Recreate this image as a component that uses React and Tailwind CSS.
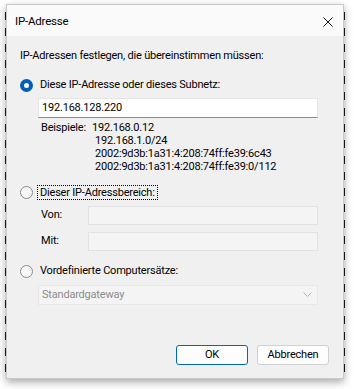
import React from "react"

const FONT = { fontFamily: 'Roboto, "Liberation Sans", Arial, sans-serif', letterSpacing: "-0.2px" }

// radio button, windows 11 style
function Radio({ checked }) {
  if (checked) {
    return (
      <span className="w-[13px] h-[13px] rounded-full bg-[#005fb8] flex items-center justify-center shrink-0">
        <span className="w-[5px] h-[5px] rounded-full bg-white" />
      </span>
    )
  }
  return <span className="w-[13px] h-[13px] rounded-full border border-[#8a8a8a] bg-[#f7f7f7] shrink-0" />
}

export default function App() {
  const beispiele = [
    "192.168.0.12",
    "192.168.1.0/24",
    "2002:9d3b:1a31:4:208:74ff:fe39:6c43",
    "2002:9d3b:1a31:4:208:74ff:fe39:0/112",
  ]

  return (
    <div className="w-[354px] h-[389px] pt-[4px] bg-white text-[11px] text-black" style={FONT}>
      {/* window behind: dashed edges */}
      <div className="ml-[5px] w-[340px] px-[1px] pb-[1px] bg-[repeating-linear-gradient(180deg,transparent_0px,transparent_8px,#1a1a1a_8px,#1a1a1a_16px)]">
        <div className="w-[338px] h-[375px] flex flex-col bg-[#f0f0f0] border border-[#c8c8c8] shadow-[0_3px_8px_rgba(0,0,0,0.35)]">
          {/* TITLE BAR */}
          <div className="h-[31px] bg-[#fafafa] flex items-center justify-between pl-[8px] pr-[10px] pt-[3px] shrink-0">
            <span className="text-[11.5px]">IP-Adresse</span>
            <svg width="10" height="10" viewBox="0 0 10 10">
              <path d="M0.5 0.5 L9.5 9.5 M9.5 0.5 L0.5 9.5" stroke="#111" strokeWidth="1" />
            </svg>
          </div>

          {/* BODY */}
          <div className="flex-1 flex flex-col px-[13px]">
            <div className="h-[14px] leading-[14px] mt-[13px]">
              IP-Adressen festlegen, die übereinstimmen müssen:
            </div>

            <div className="h-[16px] mt-[14px] flex items-center gap-[7px]">
              <Radio checked />
              <span>Diese IP-Adresse oder dieses Subnetz:</span>
            </div>

            <div className="ml-[18px] mt-[5px] w-[280px] h-[20px] bg-white border border-[#e5e5e5] border-b-[#8a8a8a] flex items-center pl-[3px]">
              192.168.128.220
            </div>

            <div className="ml-[21px] mt-[3px] flex leading-[13px]">
              <span className="w-[51px]">Beispiele:</span>
              <div className="flex flex-col">
                {beispiele.map((b, i) => (
                  <span key={i} className={i > 0 ? "pl-[3px]" : ""}>{b}</span>
                ))}
              </div>
            </div>

            <div className="h-[16px] mt-[11px] flex items-center gap-[4px]">
              <Radio />
              <span className="border border-dotted border-black px-[2px] leading-[13px]">Dieser IP-Adressbereich:</span>
            </div>

            <div className="mt-[6px] ml-[21px] flex items-center">
              <span className="w-[47px]">Von:</span>
              <div className="w-[230px] h-[19px] bg-[#f4f4f4] border border-[#e3e3e3]" />
            </div>
            <div className="mt-[7px] ml-[21px] flex items-center">
              <span className="w-[47px]">Mit:</span>
              <div className="w-[230px] h-[19px] bg-[#f4f4f4] border border-[#e3e3e3]" />
            </div>

            <div className="h-[16px] mt-[12px] flex items-center gap-[7px]">
              <Radio />
              <span>Vordefinierte Computersätze:</span>
            </div>

            <div className="ml-[18px] mt-[6px] w-[280px] h-[20px] bg-[#f4f4f4] border border-[#e8e8e8] flex items-center justify-between pl-[3px] pr-[5px] text-[#8c8c8c]">
              <span>Standardgateway</span>
              <svg width="9" height="6" viewBox="0 0 9 6">
                <path d="M0.5 0.5 L4.5 4.5 L8.5 0.5" fill="none" stroke="#b5b5b5" strokeWidth="1" />
              </svg>
            </div>

            <div className="mt-[40px] flex justify-end gap-[9px] pr-[1px]">
              <button className="w-[72px] h-[20px] bg-[#fdfdfd] border border-[#0067c0] rounded-[3px] flex items-center justify-center">
                OK
              </button>
              <button className="w-[72px] h-[20px] bg-[#fdfdfd] border border-[#d0d0d0] rounded-[3px] flex items-center justify-center">
                Abbrechen
              </button>
            </div>
          </div>
        </div>
      </div>
    </div>
  )
}
